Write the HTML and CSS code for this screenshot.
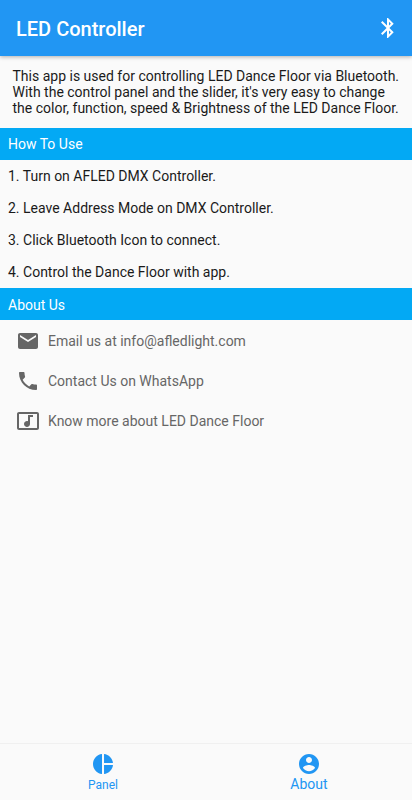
FILE: index.html
```html
<!DOCTYPE html>
<html lang="en">
<head>
<meta charset="utf-8">
<title>LED Controller</title>
<link rel="stylesheet" href="styles.css">
</head>
<body>
<header class="bar">
  <h1>LED Controller</h1>
  <svg class="bt" viewBox="0 0 24 24"><path d="M17.71 7.71L12 2h-1v7.59L6.41 5 5 6.41 10.59 12 5 17.59 6.41 19 11 14.41V22h1l5.710-5.710-4.300-4.290 4.300-4.290zM13 5.830l1.880 1.880L13 9.590V5.830zm1.880 10.460L13 18.170v-3.760l1.880 1.880z"/></svg>
</header>
<main>
  <p class="intro">This app is used for controlling LED Dance Floor via Bluetooth.<br>With the control panel and the slider, it's very easy to change<br>the color, function, speed &amp; Brightness of the LED Dance Floor.</p>
  <h2>How To Use</h2>
  <ul class="steps">
    <li>1. Turn on AFLED DMX Controller.</li>
    <li>2. Leave Address Mode on DMX Controller.</li>
    <li>3. Click Bluetooth Icon to connect.</li>
    <li>4. Control the Dance Floor with app.</li>
  </ul>
  <h2 class="about">About Us</h2>
  <ul class="links">
    <li><svg viewBox="0 0 24 24"><path d="M20 4H4c-1.100 0-1.990.9-1.990 2L2 18c0 1.100.9 2 2 2h16c1.100 0 2-.9 2-2V6c0-1.100-.9-2-2-2zm0 4l-8 5-8-5V6l8 5 8-5v2z"/></svg><span>Email us at info@afledlight.com</span></li>
    <li><svg viewBox="0 0 24 24"><path d="M6.620 10.790c1.440 2.830 3.760 5.140 6.590 6.590l2.200-2.200c.27-.27.67-.36 1.020-.24 1.120.37 2.330.57 3.570.57.55 0 1 .45 1 1V20c0 .55-.45 1-1 1-9.390 0-17-7.610-17-17 0-.55.45-1 1-1h3.500c.55 0 1 .45 1 1 0 1.250.2 2.450.57 3.570.11.35.03.74-.25 1.020l-2.200 2.200z"/></svg><span>Contact Us on WhatsApp</span></li>
    <li><svg viewBox="0 0 24 24"><path d="M21 3H3c-1.100 0-2 .9-2 2v14c0 1.100.9 2 2 2h18c1.100 0 2-.9 2-2V5c0-1.100-.9-2-2-2zm0 16H3V5h18v14zM8 15c0-1.660 1.340-3 3-3 .35 0 .69.07 1 .18V6h5v2h-3v7.030c-.02 1.640-1.350 2.970-3 2.970-1.660 0-3-1.340-3-3z"/></svg><span>Know more about LED Dance Floor</span></li>
  </ul>
</main>
<nav class="tabs">
  <a><svg viewBox="0 0 24 24"><path d="M11 2v20c-5.070-.5-9-4.790-9-10s3.930-9.500 9-10zm2.030 0v8.990H22c-.47-4.740-4.240-8.520-8.970-8.990zm0 11.010V22c4.740-.47 8.500-4.250 8.970-8.990h-8.970z"/></svg><span>Panel</span></a>
  <a class="active"><svg viewBox="0 0 24 24"><path d="M12 2C6.480 2 2 6.480 2 12s4.480 10 10 10 10-4.480 10-10S17.520 2 12 2zm0 3c1.660 0 3 1.340 3 3s-1.340 3-3 3-3-1.340-3-3 1.340-3 3-3zm0 14.200c-2.500 0-4.710-1.280-6-3.220.03-1.990 4-3.080 6-3.080 1.990 0 5.970 1.090 6 3.080-1.290 1.940-3.500 3.220-6 3.220z"/></svg><span>About</span></a>
</nav>
</body>
</html>
```
FILE: styles.css
```css
* { box-sizing: border-box; margin: 0; padding: 0; }
body {
  height: 800px;
  display: flex;
  flex-direction: column;
  background: #fafafa;
  font-family: Roboto, sans-serif;
  color: #1a1a1a;
  overflow: hidden;
}
svg { display: block; fill: currentColor; flex: none; }
ul { list-style: none; }
.bar {
  position: relative;
  height: 56px;
  padding: 0 12px 0 16px;
  display: flex;
  align-items: center;
  justify-content: space-between;
  background: #2196f3;
  color: #fff;
  box-shadow: 0 1px 4px rgba(0, 0, 0, .3);
}
.bar h1 { padding-top: 2px; font-size: 20px; font-weight: 500; line-height: 24px; }
.bt { width: 24px; height: 24px; }
main { flex: 1; }
.intro {
  height: 72px;
  padding: 12px 0 0 12.5px;
  font-size: 14px;
  line-height: 16px;
  white-space: nowrap;
}
h2 {
  height: 32px;
  padding-left: 8px;
  font-size: 14px;
  font-weight: 400;
  line-height: 32px;
  background: #03a9f4;
  color: #fff;
}
.about { padding-top: 1px; }
.steps li { height: 32px; padding-left: 8px; font-size: 14px; line-height: 32px; }
.links { padding-top: 1px; color: #666; }
.links li {
  height: 40px;
  padding-left: 16px;
  display: flex;
  align-items: center;
  gap: 8px;
  font-size: 14px;
}
.links svg { width: 24px; height: 24px; }
.tabs {
  height: 57px;
  display: flex;
  border-top: 1px solid #f0f0f0;
  color: #2196f3;
}
.tabs a {
  flex: 1;
  display: flex;
  flex-direction: column;
  align-items: center;
  padding-top: 8px;
  font-size: 12px;
  line-height: 16px;
}
.tabs svg { width: 24px; height: 24px; margin-bottom: 1px; }
.tabs .active { font-size: 14px; }
.tabs .active svg { margin-bottom: 0; }
```
